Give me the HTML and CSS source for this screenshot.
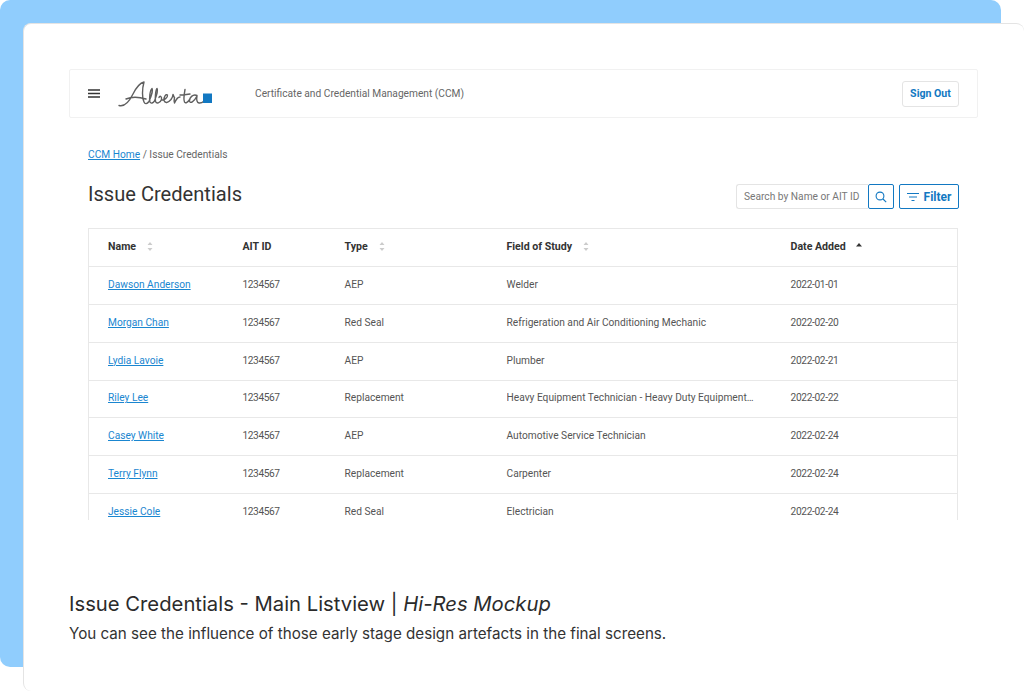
FILE: index.html
```html
<!DOCTYPE html>
<html lang="en">
<head>
<meta charset="utf-8">
<title>Issue Credentials</title>
<link rel="stylesheet" href="styles.css">
</head>
<body>
<div class="stage">
  <div class="backing"></div>
  <main class="card">
    <div class="shot">
      <header class="topbar">
        <svg class="menu" width="12" height="9" viewBox="0 0 12 9"><path d="M0 1h12M0 4.500h12M0 8h12" stroke="#333" stroke-width="1.300"/></svg>
        <svg class="logo" width="96" height="30" viewBox="0 0 96 30" role="img" aria-label="Alberta logo">
          <path class="logo-ink" d="M1 25.500C6 27 11 22 15 14C18 8 22 3 26 2C24 9 24 18 26 22C27 24.500 29 24 31 21.500C33 17 35 10 34 8.500C32 10 31 19 32 22C33 24 35 23 36.500 21C38.500 16 40 10 39 8.500C37.500 10 37 18 37.500 21.500C38.500 24 42 23.500 43.500 19.500C44 16.500 42 15 41 17.500M8 19C14 16.500 21 17 28 19M43.500 20C46 20.500 50 17.500 49.500 15C48 13.500 45.500 17 46 20.500C47 23.500 50 23 53 19.500C54 18 55 16 55 14.500C56 16 55.500 17 56.500 17.500C56 20 56 22 56.500 23C58 19.500 60 17 62 17M67 9.500C66 15 65.500 20 66.500 22C67.500 24 70 22 72 19M62 15C65 15 69 14.500 72 14M79 15.500C75 13.500 71 18 71.500 21C72 24 76 22 79 16C78.500 19 78.500 22.500 81 23C83 23.200 84.500 22.500 85.500 21.500"/>
          <rect x="85" y="13.500" width="9" height="9.500" fill="#1278c2"/>
        </svg>
        <span class="app-name">Certificate and Credential Management (CCM)</span>
        <button class="signout">Sign Out</button>
      </header>
      <section class="content">
        <nav class="crumbs"><a href="#">CCM Home</a> / Issue Credentials</nav>
        <div class="title-row">
          <h1>Issue Credentials</h1>
          <div class="tools">
            <span class="search-input">Search by Name or AIT ID</span>
            <button class="search-btn" aria-label="Search"><svg width="12" height="12" viewBox="0 0 12 12"><circle cx="5" cy="5" r="3.900" fill="none" stroke="#1278c2" stroke-width="1.100"/><path d="M8 8l3.200 3.200" stroke="#1278c2" stroke-width="1.100"/></svg></button>
            <button class="filter-btn"><svg width="12" height="8" viewBox="0 0 12 8"><path d="M0 .5h12M2 4h8M4.500 7.500h3" stroke="#1278c2" stroke-width="1"/></svg>Filter</button>
          </div>
        </div>
        <div class="table-clip">
          <table>
            <thead>
              <tr>
                <th class="c1">Name<svg class="sort" width="6" height="9" viewBox="0 0 6 9"><path d="M3 0l2.500 3h-5zM3 9L.5 6h5z" fill="#ccc"/></svg></th>
                <th class="c2">AIT ID</th>
                <th class="c3">Type<svg class="sort" width="6" height="9" viewBox="0 0 6 9"><path d="M3 0l2.500 3h-5zM3 9L.5 6h5z" fill="#ccc"/></svg></th>
                <th class="c4">Field of Study<svg class="sort" width="6" height="9" viewBox="0 0 6 9"><path d="M3 0l2.500 3h-5zM3 9L.5 6h5z" fill="#ccc"/></svg></th>
                <th class="c5">Date Added<svg class="sort sort-on" width="6" height="4" viewBox="0 0 6 4"><path d="M3 0l3 3.500h-6z" fill="#333"/></svg></th>
              </tr>
            </thead>
            <tbody>
              <tr><td><a href="#">Dawson Anderson</a></td><td class="num">1234567</td><td>AEP</td><td>Welder</td><td class="date">2022-01-01</td></tr>
              <tr><td><a href="#">Morgan Chan</a></td><td class="num">1234567</td><td>Red Seal</td><td>Refrigeration and Air Conditioning Mechanic</td><td class="date">2022-02-20</td></tr>
              <tr><td><a href="#">Lydia Lavoie</a></td><td class="num">1234567</td><td>AEP</td><td>Plumber</td><td class="date">2022-02-21</td></tr>
              <tr><td><a href="#">Riley Lee</a></td><td class="num">1234567</td><td>Replacement</td><td><span class="trunc">Heavy Equipment Technician - Heavy Duty Equipment Mechanic</span></td><td class="date">2022-02-22</td></tr>
              <tr><td><a href="#">Casey White</a></td><td class="num">1234567</td><td>AEP</td><td>Automotive Service Technician</td><td class="date">2022-02-24</td></tr>
              <tr><td><a href="#">Terry Flynn</a></td><td class="num">1234567</td><td>Replacement</td><td>Carpenter</td><td class="date">2022-02-24</td></tr>
              <tr><td><a href="#">Jessie Cole</a></td><td class="num">1234567</td><td>Red Seal</td><td>Electrician</td><td class="date">2022-02-24</td></tr>
            </tbody>
          </table>
        </div>
      </section>
    </div>
    <section class="caption">
      <h2>Issue Credentials - Main Listview | <em>Hi-Res Mockup</em></h2>
      <p>You can see the influence of those early stage design artefacts in the final screens.</p>
    </section>
  </main>
</div>
</body>
</html>
```

FILE: styles.css
```css
* { box-sizing: border-box; }
html, body { margin: 0; padding: 0; background: #fff; }
body { width: 1024px; height: 691px; overflow: hidden; font-family: Roboto, "Liberation Sans", sans-serif; }
button { font-family: inherit; cursor: pointer; }

.stage { display: grid; width: 1024px; height: 691px; }
.backing { grid-area: 1 / 1; width: 1001px; height: 667px; background: #90cdfd; border-radius: 10px; }
.card {
  grid-area: 1 / 1;
  margin: 23px 0 0 23px;
  height: 668px;
  background: #fff;
  border: 1px solid #e4e4e4;
  border-right: 0;
  border-bottom: 0;
  border-radius: 8px 8px 0 8px;
  padding: 45px 45px 0 45px;
}

.topbar {
  display: flex;
  align-items: center;
  height: 49px;
  width: 909px;
  padding: 0 18px 0 18px;
  border: 1px solid #f1f1f1;
  border-radius: 2px;
}
.menu { flex: none; }
.logo { flex: none; margin: 3px 0 0 18px; }
.logo-ink { fill: none; stroke: #5f5f5f; stroke-width: 1.400; stroke-linecap: round; stroke-linejoin: round; }
.app-name { margin-left: 41px; font-size: 10.200px; color: #666; }
.signout {
  margin-left: auto;
  width: 57px;
  height: 26px;
  padding: 0;
  background: #fff;
  border: 1px solid #e4e4e4;
  border-radius: 3px;
  color: #1278c2;
  font-size: 10.600px;
  font-weight: 700;
}

.content { padding: 30px 19px 0 19px; width: 909px; }
.crumbs { font-size: 10.200px; line-height: 14px; color: #666; }
.crumbs a, td a { color: #1a86d0; }
.title-row { display: flex; align-items: center; justify-content: space-between; height: 25px; margin-top: 22px; }
h1 { margin: 0 0 6px; font-size: 20.100px; font-weight: 400; color: #333; }
.tools { display: flex; height: 25px; }
.search-input {
  width: 132px;
  padding: 0 7px;
  border: 1px solid #e4e4e4;
  border-right: 0;
  border-radius: 3px 0 0 3px;
  font-size: 10.200px;
  line-height: 23px;
  color: #777;
  white-space: nowrap;
}
.search-btn, .filter-btn {
  display: flex;
  align-items: center;
  justify-content: center;
  padding: 0;
  background: #fff;
  border: 1.500px solid #1278c2;
  border-radius: 2px;
}
.search-btn { width: 26px; }
.filter-btn {
  gap: 5px;
  width: 60px;
  margin-left: 5px;
  color: #1278c2;
  font-size: 12px;
  font-weight: 700;
}

.table-clip { height: 292px; margin-top: 19px; overflow: hidden; }
table {
  width: 870px;
  border-collapse: collapse;
  table-layout: fixed;
  border: 1px solid #e8e8e8;
  font-size: 10.200px;
  color: #555;
}
th, td { height: 37.880px; padding: 0 0 2px 19px; text-align: left; border-bottom: 1px solid #e8e8e8; white-space: nowrap; }
th { color: #333; font-weight: 700; font-size: 10.600px; }
th + th, td + td { padding-left: 0; }
.c1 { width: 154px; }
.c2 { width: 102px; }
.c3 { width: 162px; }
.c4 { width: 284px; }
.num { letter-spacing: -.43px; }
.date { letter-spacing: -.35px; }
.sort { margin-left: 11px; vertical-align: -1px; }
.sort-on { margin-left: 10px; vertical-align: 3px; }
.trunc { display: block; width: 249px; overflow: hidden; text-overflow: ellipsis; }

.caption { margin-top: 0; padding-top: 71px; }
h2 { margin: 0; font-family: Inter, "Open Sans", sans-serif; font-size: 20.250px; line-height: 26px; font-weight: 400; color: #2b2b2b; }
h2 em { font-style: italic; }
.caption p { margin: 5px 0 0; font-family: Inter, "Open Sans", sans-serif; font-size: 15.200px; line-height: 24px; color: #333; }
```
